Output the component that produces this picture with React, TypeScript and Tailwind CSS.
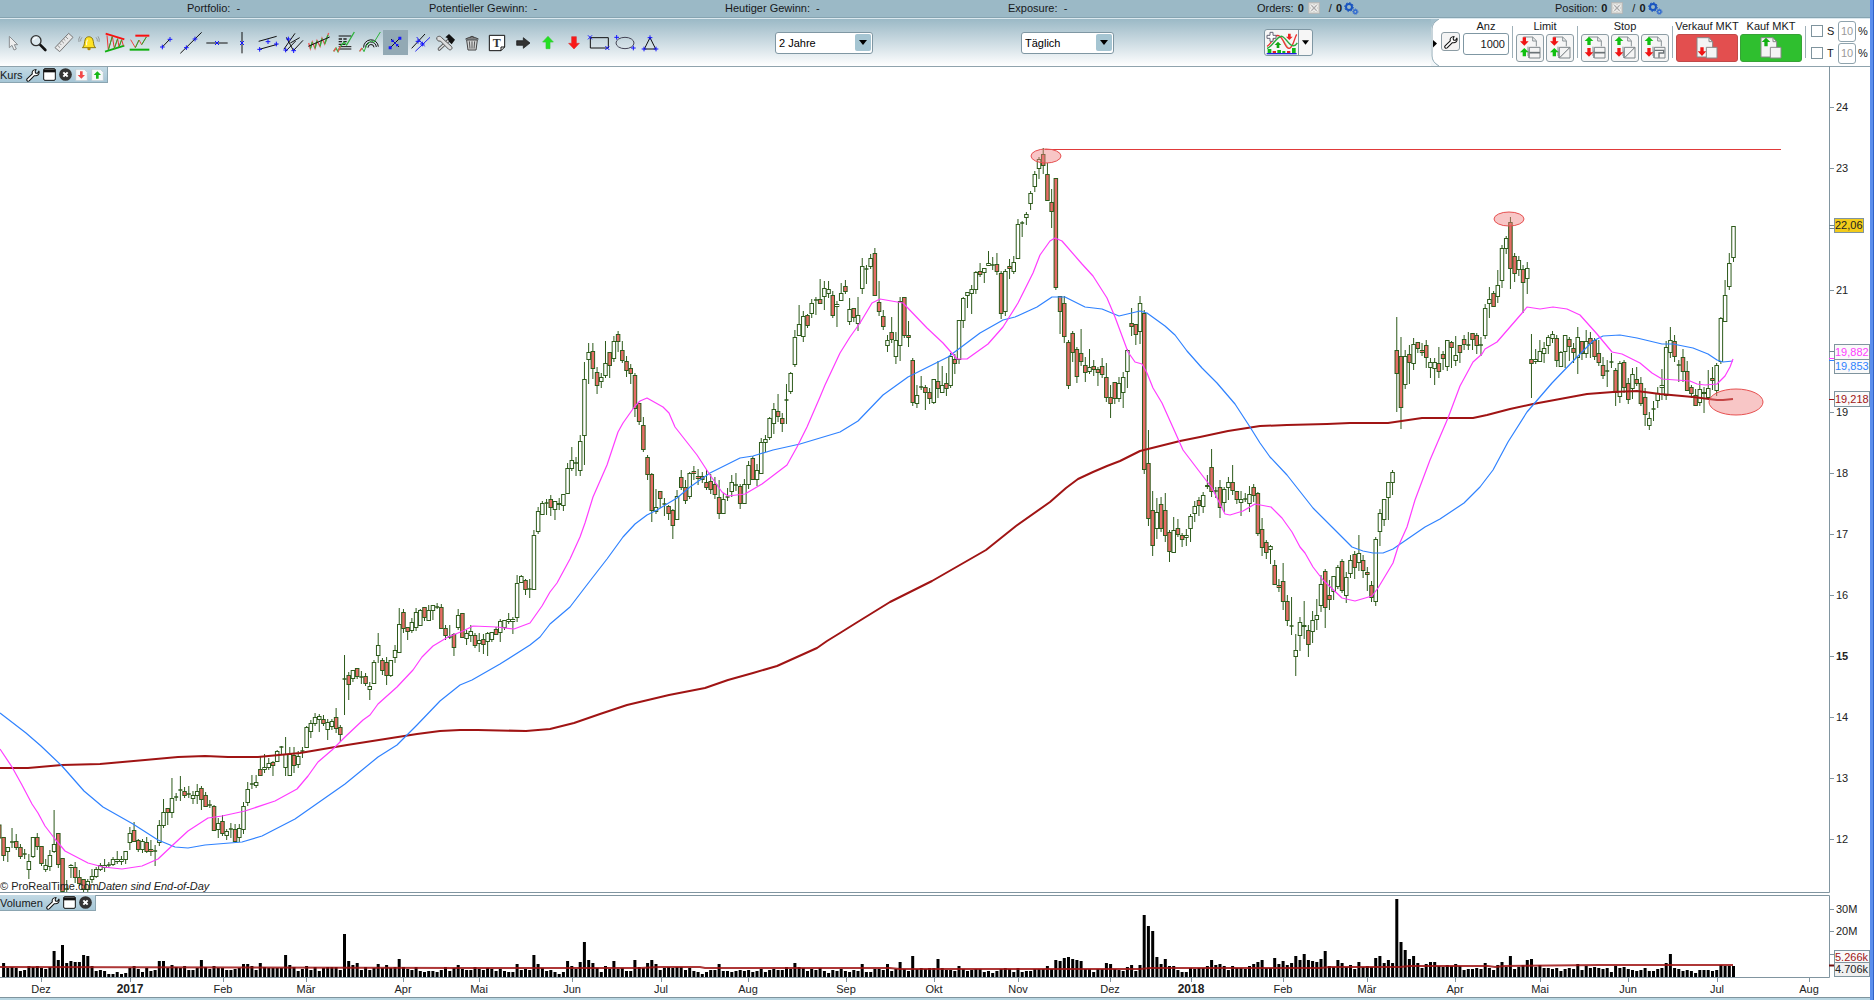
import React from "react";

/* ---------- chart data ---------- */

const FIRST_X = 3.6;
const STEP = 4.209;

// One entry per session: high, body top, body bottom, low; "r" marks a falling session.
const SESSIONS = `
r837 837 855 860;847 847 851 861;828 842 842 847;r834 841 847 849;r844 847 856 858;849 854 854 858;854 861 869 878;837 837 856 857;r833 837 846 849;r846 846 863 865;
859 865 869 871;850 855 866 870;810 844 851 852;r833 833 864 867;r858 858 891 891;880 889 889 891;864 865 867 877;r862 867 877 882;r870 877 883 885;r879 879 889 891;
879 881 889 891;869 876 879 882;867 869 876 877;863 865 869 870;859 865 867 871;862 865 865 867;857 859 864 865;851 859 861 863;856 859 861 864;851 851 859 863;
827 833 842 849;r822 830 841 841;r839 840 849 851;839 841 849 852;r837 842 851 852;r840 849 851 855;845 851 851 865;820 825 842 845;799 812 825 827;r808 808 812 824;
778 798 812 817;793 797 797 800;776 790 790 800;r787 791 795 797;786 794 794 797;791 795 798 803;784 791 795 803;r786 788 799 809;r792 795 806 806;800 805 805 807;
r805 806 830 830;818 823 829 837;r815 821 833 835;829 831 835 839;823 829 829 837;r824 829 841 841;824 828 837 841;802 806 829 833;782 789 802 805;775 784 784 788;
775 782 785 787;r757 769 775 775;754 767 769 772;758 763 767 769;r761 762 765 775;750 751 761 761;746 747 747 753;737 754 767 775;747 754 775 775;r747 755 765 772;
751 756 764 767;747 751 751 757;726 727 747 747;720 723 731 737;713 717 723 725;714 716 719 731;r715 719 723 725;719 722 729 739;719 721 726 729;r708 717 728 732;
r725 727 734 741;655 679 679 714;r672 675 684 699;670 670 678 681;r668 668 676 678;671 677 677 683;r673 676 683 685;682 686 689 699;660 662 683 683;633 645 655 662;
r658 660 670 674;r657 662 675 684;660 660 675 676;645 650 657 662;608 624 652 652;r609 612 628 632;r627 627 631 639;618 622 630 632;608 612 627 630;609 610 625 625;
r607 607 617 620;605 610 620 620;605 605 610 619;603 607 607 608;r604 607 628 628;r625 628 635 639;625 637 637 638;r633 634 647 655;609 615 627 629;r613 613 637 637;
630 633 638 644;625 631 635 641;r633 635 645 647;633 640 643 651;r634 639 644 653;632 633 641 655;632 632 639 641;r627 629 634 634;619 621 632 641;620 620 627 629;
613 619 621 623;617 619 621 633;575 583 617 621;575 576 582 582;r579 580 589 594;579 589 589 597;530 535 589 589;507 511 531 533;501 503 514 514;499 503 503 514;
r495 499 507 515;501 501 509 519;498 503 504 509;494 494 505 510;463 468 493 493;447 460 468 470;457 463 463 475;435 441 470 475;362 379 435 464;343 352 359 383;
r343 351 368 378;r367 372 385 393;373 377 381 387;341 363 375 377;r352 352 365 377;336 341 358 361;r331 334 341 351;r341 350 360 362;r356 361 370 376;r364 368 373 383;
r373 375 408 416;r403 403 421 424;r417 425 449 451;r455 457 474 479;r473 474 510 521;489 507 511 513;r491 491 498 507;498 504 504 515;r505 506 513 519;r509 510 525 538;
490 496 519 519;r470 477 487 489;r480 487 500 503;472 473 496 498;r466 471 473 479;r469 476 478 484;r472 476 479 482;r470 482 487 489;r474 481 489 493;r477 484 494 498;
r480 497 513 518;493 499 513 513;488 497 497 500;475 482 491 496;473 485 485 490;r484 486 503 508;479 484 503 503;461 465 484 488;r456 458 479 479;464 470 479 485;
438 442 473 473;435 439 442 451;417 418 437 439;403 409 423 433;r394 411 416 421;r413 418 423 431;384 400 400 423;372 373 391 393;330 337 364 366;305 324 335 335;
311 316 336 341;r314 315 325 327;299 303 313 317;297 300 300 314;r279 299 303 303;281 288 296 309;281 289 293 297;r291 295 315 317;301 304 306 326;283 293 300 300;
r280 286 291 293;298 309 321 324;r308 308 317 321;297 315 323 330;258 266 288 293;265 269 269 283;254 258 266 268;r248 253 295 295;r281 302 311 315;r310 316 326 329;
335 340 345 351;r317 332 339 342;332 340 356 363;297 301 345 360;r297 297 335 337;r321 335 337 346;r358 360 402 405;385 395 403 407;376 387 387 389;r385 387 392 409;
r388 392 398 403;379 379 402 403;r361 381 388 397;366 385 392 392;r373 383 388 395;353 356 385 387;r354 359 363 373;320 320 359 363;297 298 320 327;292 292 295 307;
285 289 293 313;271 272 289 293;r263 271 274 276;268 268 272 282;251 263 265 265;257 265 265 269;r253 264 271 274;r271 273 313 318;269 271 311 315;r259 266 268 278;
256 262 271 273;219 224 258 258;221 223 223 236;212 214 217 224;191 193 203 209;171 174 186 191;157 159 168 178;r148 154 165 173;r163 174 200 200;r189 202 211 227;
r178 178 287 289;r296 296 311 333;r296 303 336 342;r340 342 385 388;r331 333 352 361;r347 349 376 382;r329 353 361 365;r357 365 372 381;349 367 371 373;r360 366 369 375;
r367 369 372 385;r358 366 374 377;r363 377 397 401;r385 397 403 417;r382 382 398 403;377 383 398 401;372 377 392 407;349 350 371 387;r308 323 326 335;r324 324 334 344;
296 303 331 343;r310 313 469 473;r430 463 518 525;r491 510 545 555;498 512 528 538;r497 504 528 531;r493 510 535 541;r530 532 551 561;517 530 552 552;r519 528 534 536;
r533 535 539 546;529 535 537 545;514 516 528 541;501 506 513 521;r497 500 505 515;492 495 506 512;r475 485 486 488;r449 467 491 496;487 491 491 497;r480 487 507 517;
487 489 502 511;477 482 487 499;r465 482 490 494;r491 491 499 503;491 499 502 515;493 499 499 501;486 494 503 511;r484 487 495 501;r492 493 533 535;r518 529 547 555;
r540 542 552 558;545 546 549 563;r560 565 584 584;r579 585 587 591;r563 581 601 609;r595 601 620 625;597 626 626 634;634 650 656 675;617 622 635 650;601 625 626 638;
r625 630 644 656;611 620 631 642;599 615 619 629;575 584 605 611;r569 571 607 627;r580 595 599 609;576 576 591 599;565 567 586 588;r559 561 590 592;572 577 595 602;
555 560 573 577;r551 554 567 578;535 553 562 570;r555 560 570 577;r567 572 574 590;r581 585 597 601;537 539 601 605;509 513 531 545;499 499 519 525;482 482 497 519;
470 472 482 494;r317 350 373 411;r337 356 407 428;350 356 384 388;r345 354 362 383;338 344 363 369;r342 342 348 352;r343 350 352 355;r340 345 357 367;358 362 367 377;
358 362 368 384;r347 363 371 377;r351 354 358 369;340 340 366 370;r341 342 347 367;336 355 360 365;r345 345 352 362;r335 339 344 349;332 345 345 349;r333 333 339 349;
r333 335 345 353;337 345 345 355;304 308 335 338;287 299 303 317;r291 293 306 306;270 285 296 302;245 248 280 287;236 238 248 253;r217 222 268 288;r253 256 273 281;
256 260 269 275;r265 269 282 312;262 268 278 293;r334 359 363 397;349 359 361 363;340 351 361 361;342 348 353 362;335 337 345 353;331 334 338 342;r335 338 360 366;
351 352 366 366;335 335 351 367;r337 339 346 360;r343 348 352 362;327 337 357 373;r341 341 353 359;330 341 353 357;r332 338 343 357;r338 340 356 359;r340 353 362 365;
r357 365 375 378;360 371 371 386;353 362 362 367;r368 370 392 405;361 363 396 402;r360 362 387 392;r378 383 399 403;368 374 388 398;r367 379 383 385;r377 383 403 405;
r388 397 414 425;412 418 425 429;401 409 409 420;387 393 400 407;369 385 387 399;341 347 395 399;327 340 352 357;r335 341 356 361;360 365 365 381;r349 357 371 381;
r361 371 390 390;r385 387 393 397;r389 395 405 405;381 389 402 405;r387 392 393 412;370 388 397 397;r367 378 380 389;363 365 390 395;317 318 361 363;280 295 321 321;
253 263 286 289;226 226 257 261`
  .trim()
  .split(";")
  .map((entry) => {
    const text = entry.trim();
    const falling = text.startsWith("r");
    const [high, top, bottom, low] = text.replace("r", "").split(" ").map(Number);
    return { falling, high, top, bottom, low };
  });

const VOLUMES = `
14 9 10 9 6 7 11 10 11 9 8 10 26 17 32 14 16 15 15 22 21 11 6 7 6 3 3 5 3 4 9 11 8 5 9 6 7 16 16 9
12 10 9 11 7 7 9 17 10 8 11 9 9 7 7 8 9 13 13 11 7 14 10 9 9 9 9 22 12 10 6 8 11 7 10 6 9 10 10 10
7 43 16 12 14 7 10 7 9 13 9 12 9 10 18 10 8 7 10 6 5 6 6 5 7 10 6 9 12 8 7 7 10 8 7 9 8 6 8 6
5 5 13 7 8 7 22 13 9 6 7 5 3 5 16 11 8 15 35 17 14 9 5 11 8 16 8 9 6 6 17 10 9 14 17 13 7 9 10 9
10 10 7 9 6 5 3 5 7 7 13 6 6 5 6 7 6 7 5 6 8 5 7 8 7 7 10 8 14 10 9 6 8 7 9 6 4 7 6 8
6 5 7 6 13 5 5 8 8 7 13 6 8 15 8 6 21 8 9 8 9 9 18 9 7 7 6 11 8 6 7 8 8 5 6 4 6 8 9 8
5 9 5 6 6 8 8 8 11 8 17 16 19 20 18 17 16 8 8 5 8 8 14 13 8 7 6 10 12 6 12 62 51 46 20 13 18 11 11 7
5 5 9 8 9 9 11 17 12 13 11 7 11 9 9 8 11 13 15 17 9 9 19 13 16 12 14 21 17 23 17 16 15 18 26 11 10 17 14 10
12 8 15 10 11 10 19 21 14 17 14 78 35 27 18 21 14 9 13 15 15 11 10 12 11 13 11 7 8 8 9 8 14 9 7 12 15 10 21 8
10 12 17 18 10 12 9 9 8 9 6 8 9 8 13 7 11 9 10 9 8 9 5 11 9 10 8 7 6 7 9 6 6 8 9 14 23 9 8 6
7 6 4 7 7 7 6 7 12 11 11 11`
  .trim()
  .split(/\s+/)
  .map(Number);

const SLOW_AVERAGE =
  "0,768 28,768 62,765 100,764 145,760 178,757 205,756 228,757 258,757 300,753 347,745 417,734 440,731 460,730 478,730 526,731 550,729 574,723 600,714 627,705 669,695 705,688 728,680 753,673 777,666 797,657 817,648 827,641 840,633 856,623 890,602 932,581 986,550 1016,526 1050,502 1066,488 1078,479 1093,472 1107,466 1120,461 1140,451 1180,441 1200,437 1228,431 1260,426 1287,425 1327,424 1350,423 1388,423 1422,418 1473,418 1487,415 1510,409 1533,404 1560,399 1587,394 1613,392 1637,391 1660,394 1693,397 1717,400 1723,400 1733,399";

const MEDIUM_AVERAGE =
  "0,713 26,733 41,746 62,766 84,791 103,807 133,824 158,840 175,847 188,848 205,845 242,842 262,836 295,819 345,784 378,757 397,745 417,725 440,701 460,685 472,680 500,664 530,645 540,637 550,624 570,607 583,590 593,577 607,559 623,537 635,524 647,515 657,510 677,498 690,487 710,473 740,458 753,456 773,450 800,444 840,432 858,421 883,395 908,377 948,357 980,333 1003,320 1015,317 1037,307 1052,297 1065,297 1085,307 1102,309 1119,316 1140,311 1147,313 1165,326 1175,335 1187,351 1202,368 1217,383 1235,404 1250,427 1260,443 1270,457 1287,475 1313,508 1333,528 1352,547 1363,551 1373,553 1383,553 1393,549 1425,527 1440,519 1464,503 1480,487 1493,470 1508,442 1527,412 1552,383 1577,357 1593,341 1603,336 1620,335 1637,338 1662,344 1673,344 1693,348 1708,354 1717,360 1723,362 1733,361";

const FAST_AVERAGE =
  "0,749 12,767 22,785 32,804 38,813 45,826 55,839 65,851 88,863 103,867 122,869 142,866 158,859 175,843 188,831 208,818 222,816 245,811 275,801 297,789 308,776 318,762 332,750 345,737 363,720 370,715 378,704 397,687 413,670 422,657 433,646 448,637 463,631 473,626 497,627 514,629 530,623 542,606 550,592 557,583 570,559 580,537 585,523 593,497 607,465 618,432 623,423 635,406 640,401 647,398 663,407 669,413 675,427 697,455 710,475 722,492 728,496 745,494 762,484 787,465 797,447 807,427 820,397 825,385 840,353 850,337 860,323 872,303 880,299 903,303 927,328 943,343 957,359 967,359 988,344 1003,327 1018,303 1033,273 1040,255 1050,241 1055,238 1062,241 1082,264 1093,276 1107,298 1115,317 1128,352 1135,362 1142,364 1147,373 1153,388 1162,403 1175,432 1183,450 1202,475 1212,488 1218,500 1225,514 1230,515 1243,511 1255,504 1271,507 1282,518 1292,532 1300,547 1305,553 1313,567 1323,580 1342,598 1355,601 1372,596 1378,588 1393,563 1398,547 1407,527 1415,500 1430,460 1448,418 1460,386 1473,362 1482,354 1485,349 1497,342 1510,327 1523,312 1527,307 1540,309 1553,307 1567,309 1580,315 1597,334 1612,352 1622,354 1640,363 1652,373 1662,379 1690,381 1697,384 1705,385 1717,384 1725,376 1730,367 1733,359";

const VOLUME_AVERAGE =
  "0,967 460,968 640,968 660,967 700,967 705,968 890,968 900,969 1140,969 1150,968 1320,968 1330,967 1400,967 1410,966 1488,966 1495,967 1505,966 1600,965 1733,965";

const PRICES = [24, 23, 21, 19, 18, 17, 16, 15, 14, 13, 12];

const MONTHS: [number, string][] = [
  [41, "Dez"], [130, "2017"], [223, "Feb"], [306, "Mär"], [403, "Apr"], [479, "Mai"], [572, "Jun"],
  [661, "Jul"], [748, "Aug"], [846, "Sep"], [934, "Okt"], [1018, "Nov"], [1110, "Dez"], [1191, "2018"],
  [1283, "Feb"], [1367, "Mär"], [1455, "Apr"], [1540, "Mai"], [1628, "Jun"], [1717, "Jul"], [1809, "Aug"],
];

/* ---------- toolbar drawings ---------- */

type MarkProps = { x: number; y: number };

function Plus({ x, y }: MarkProps) {
  return <path d={`M${x - 7} ${y}h14M${x} ${y - 7}v14`} stroke="#1414ff" strokeWidth="3" fill="none" />;
}

function Cross({ x, y }: MarkProps) {
  return <path d={`M${x - 6} ${y - 6}l12 12M${x + 6} ${y - 6}l-12 12`} stroke="#1414ff" strokeWidth="3" fill="none" />;
}

function Wrench({ className }: { className: string }) {
  return (
    <svg viewBox="0 0 40 40" className={className} aria-hidden="true">
      <path
        d="M3 31 18 17c-2-7 3-13 11-13l-3 7 2 4h5l4-6c2 9-4 15-13 13L9 37c-4 3-9-2-6-6z"
        fill="#fff" stroke="#111" strokeWidth="3" strokeLinejoin="round"
      />
    </svg>
  );
}

const INK = { stroke: "#111", strokeWidth: 3, fill: "none" };

const TOOLS: { name: string; art: React.ReactNode }[] = [
  { name: "Auswahl", art: <path d="M-11-20v34l8-7 6 14 7-3-6-13h10z" fill="#eee" stroke="#8b8f92" strokeWidth="3" /> },
  {
    name: "Lupe",
    art: <><path d="M6 5 22 21" stroke="#111" strokeWidth="8" strokeLinecap="round" /><circle cx="-6" cy="-7" r="15" fill="#dce8ee" stroke="#333" strokeWidth="4" /><path d="M-14-9q3-8 11-7" stroke="#fff" strokeWidth="4" fill="none" /></>,
  },
  {
    name: "Lineal",
    art: <><path d="M-27 14 14-29 27-17-13 26z" fill="#e8e8e8" stroke="#777" strokeWidth="3" /><path d="M-19 7l7 7M-13 1l5 5M-7-6l7 7M-1-12l5 5M5-19l7 7" stroke="#666" strokeWidth="2" /></>,
  },
  {
    name: "Alarm",
    art: <><path d="M-20 14c8-5 5-17 9-26 3-9 18-9 22 0 4 9 1 21 9 26z" fill="#ffe324" stroke="#8c7a10" strokeWidth="3" /><circle cy="17" r="5" fill="#b58c00" /><path d="M-5-10q-3 7-2 17" stroke="#fff" strokeWidth="3" fill="none" /><path d="M-21-17q-5 5-4 12M-27-20q-6 8-3 17M21-17q5 5 4 12M27-20q6 8 3 17" stroke="#777" strokeWidth="2" fill="none" /></>,
  },
  {
    name: "Dreiecksmuster",
    art: <><path d="M-28-28 28-11" stroke="#fa1010" strokeWidth="6" /><path d="M-30 26 28 8" stroke="#10b010" strokeWidth="6" /><path d="M-24-23-20 21-8-20-2 16 8-13 12 12 20-10 25 8" stroke="#e33" strokeWidth="3" fill="none" /><path d="M-20 21-8-20M-2 16 8-13M12 12l8-22" stroke="#1db32a" strokeWidth="3" /></>,
  },
  {
    name: "Rechteckmuster",
    art: <><path d="M-14-22h42" stroke="#fa1010" strokeWidth="6" /><path d="M-31 20h59" stroke="#10b010" strokeWidth="6" /><path d="M-28-10-14 14-3-9 5 5 19-18" stroke="#e44" strokeWidth="3" fill="none" /><path d="M-14 14-3-9M5 5l14-23" stroke="#1db32a" strokeWidth="3" /></>,
  },
  { name: "Segment", art: <><path d="M-11 12 11-11" {...INK} /><Plus x={-11} y={12} /><Plus x={12} y={-11} /></> },
  { name: "Gerade", art: <><path d="M-32 31 32-32" {...INK} /><Plus x={-14} y={14} /><Plus x={12} y={-12} /></> },
  { name: "Horizontale", art: <><path d="M-32 0h64" {...INK} /><Cross x={0} y={0} /></> },
  { name: "Vertikale", art: <><path d="M0-33v64" {...INK} /><Cross x={0} y={0} /></> },
  { name: "Kanal", art: <><path d="M-28-5 26-20M-26 19 28 4" {...INK} /><Plus x={-25} y={19} /><Plus x={0} y={-4} /><Plus x={25} y={3} /></> },
  { name: "Pitchfork", art: <><path d="M-27 18 6-29M-20-17 2 24M-8 0 20-16M-22 25 8-6M2 22 30-8" {...INK} /><Plus x={-14} y={-12} /><Plus x={-22} y={21} /><Plus x={2} y={23} /></> },
  {
    name: "Regression",
    art: <><path d="M-31 0-26 17-20-3-12 16-6-7 3 10 9-14 17 3 29-30" stroke="#e55" strokeWidth="4" fill="none" /><path d="M-26 17-20-3M-12 16-6-7M3 10 9-14M17 3 27-24" stroke="#2db33a" strokeWidth="4" /><path d="M-32 10 32-18" {...INK} /></>,
  },
  {
    name: "Fibonacci",
    art: <><path d="M-16-21h38M-16 11h38M-16 18h38" {...INK} /><path d="M-16-12h10M-2-12h10M-16-4h10M-2-4h10M-16 4h20" stroke="#222" strokeWidth="4" /><path d="M-31 25-24 15-18 26-11 10 0-2 8 6 31-33" stroke="#2db33a" strokeWidth="4" fill="none" /><path d="M-31 25-24 15M-18 26-11 10" stroke="#e55" strokeWidth="4" /></>,
  },
  {
    name: "Fibonacci-Bögen",
    art: <><path d="M-19 14a22 22 0 0 1 44-3M-13 14a16 16 0 0 1 32-2M-6 14a9 9 0 0 1 18-1" {...INK} /><path d="M-31 25-24 15-18 26-11 8 4-7 12-2 31-33" stroke="#2db33a" strokeWidth="3" fill="none" /><path d="M-31 25-24 15" stroke="#e55" strokeWidth="4" /></>,
  },
  {
    name: "Trendlinie magnetisch",
    art: <><path d="M-18 18 18-18M-12-12 12 12" {...INK} /><g fill="#1414ff"><path d="M-19 10h9v9h-9zM10-19h9v9h-9zM-11-10h7v7h-7zM3 3h7v7H3zM-2-2h5v5h-5z" /></g></>,
  },
  {
    name: "Parallele",
    art: <><path d="M-28 16 12-27" {...INK} /><path d="M-17 25 27-17M-13-18 11 10" stroke="#2020f0" strokeWidth="3" /><Plus x={-9} y={-5} /><Plus x={4} y={3} /></>,
  },
  {
    name: "Werkzeuge",
    art: <><path d="M-20 18 8-8" stroke="#555" strokeWidth="10" strokeLinecap="round" /><path d="M-20 18 8-8" stroke="#ddd" strokeWidth="5" strokeLinecap="round" /><path d="M-28-16c5-6 12-5 15 0l29 26c6 6-2 14-8 9L-17-6c-6 2-11-2-11-10z" fill="#ddd" stroke="#555" strokeWidth="3" /><path d="M-2-17 9-27 27-10 17 4 9-4 4-15z" fill="#111" /></>,
  },
  {
    name: "Löschen",
    art: <><path d="M-16-9h32l-4 30h-24z" fill="#d4d6d6" stroke="#444" strokeWidth="3" /><path d="M-8-5l2 22M0-5v22M8-5 6 17" stroke="#555" strokeWidth="3" /><path d="M-19-12q19-12 38 0zM-6-17q6-7 12 0" fill="#bbb" stroke="#444" strokeWidth="3" /></>,
  },
  {
    name: "Text",
    art: <><path d="M-23-23h46v35L12 23h-35z" fill="#fff" stroke="#111" strokeWidth="3" /><path d="M12 23V12h11" {...INK} /><text x="-1" y="12" fontSize="36" fontWeight="700" textAnchor="middle" className="font-['Liberation_Serif',serif]" fill="#333">T</text></>,
  },
  { name: "Pfeil rechts", art: <path d="M-19-7H1v-9l20 16L1 16V7h-20z" fill="#333" stroke="#111" strokeWidth="2" /> },
  { name: "Pfeil hoch", art: <path d="M0-20 16-3H6v20H-6V-3h-10z" fill="#22e022" stroke="#3c3" strokeWidth="2" /> },
  { name: "Pfeil runter", art: <path d="M0 18-16 1h9v-20H7V1h9z" fill="#fa1818" stroke="#d33" strokeWidth="2" /> },
  { name: "Rechteck", art: <><path d="M-26-16h54v31h-54z" {...INK} /><Cross x={-27} y={-17} /><Cross x={25} y={15} /></> },
  { name: "Ellipse", art: <><ellipse rx="27" ry="17" {...INK} stroke="#445" /><Plus x={-25} y={-17} /><Plus x={25} y={15} /></> },
  { name: "Dreieck", art: <><path d="M0-16 17 18h-34z" {...INK} /><Plus x={0} y={-16} /><Plus x={-18} y={18} /><Plus x={18} y={18} /></> },
];

function Gears() {
  return (
    <svg viewBox="0 0 45 39" className="h-[13px] w-[15px]" aria-hidden="true">
      <circle cx="15" cy="15" r="9" fill="none" stroke="#1a55c0" strokeWidth="6" />
      <circle cx="15" cy="15" r="13" fill="none" stroke="#1a55c0" strokeWidth="3" strokeDasharray="5 5" />
      <circle cx="34" cy="29" r="5" fill="none" stroke="#2b66d0" strokeWidth="4" />
      <circle cx="34" cy="29" r="8" fill="none" stroke="#2b66d0" strokeWidth="3" strokeDasharray="3 3" />
    </svg>
  );
}

function GreyCancel() {
  return (
    <svg viewBox="0 0 36 36" className="h-3 w-3" aria-hidden="true">
      <path d="M1 1h34v34H1z" fill="#d6d6d2" stroke="#aaa" strokeWidth="2" />
      <path d="M9 9l18 18M27 9 9 27" stroke="#fff" strokeWidth="9" />
      <path d="M10 10l16 16M26 10 10 26" stroke="#aaa" strokeWidth="4" />
    </svg>
  );
}

function Counter({ label }: { label: string }) {
  return (
    <div className="flex items-center">
      <span>{label}</span>
      <b className="ml-1">0</b>
      <button aria-label={`${label} löschen`} className="ml-1"><GreyCancel /></button>
      <span className="ml-[9px]">/</span>
      <b className="ml-1">0</b>
      <button aria-label={`${label} Einstellungen`} className="ml-[2px]"><Gears /></button>
    </div>
  );
}

function DropDown({ label, value, width }: { label: string; value: string; width: string }) {
  return (
    <div className={`relative h-[22px] ${width}`}>
      <select
        aria-label={label}
        defaultValue={value}
        className="h-full w-full appearance-none rounded-[3px] border border-[#7f97a3] bg-white pl-[3px] text-[11px] text-black outline-none"
      >
        <option>{value}</option>
      </select>
      <span className="pointer-events-none absolute right-[2px] top-[2px] flex h-[17px] w-4 items-center justify-center rounded-[2px] bg-[#a5c5d2]">
        <svg viewBox="0 0 8 5" className="h-[5px] w-2"><path d="M0 0h8L4 5z" fill="#000" /></svg>
      </span>
    </div>
  );
}

type OrderKind = "limit" | "limit-free" | "stop" | "stop-free" | "stop-trail";

function OrderButton({ kind, label }: { kind: OrderKind; label: string }) {
  const sellFirst = kind === "limit" || kind === "limit-free";
  return (
    <button aria-label={label} className="flex h-7 w-7 items-center justify-center rounded-[3px] border border-[#8c9ca4] bg-[#f6f6f6]">
      <svg viewBox="3 3 78 78" className="h-[26px] w-[26px]" aria-hidden="true">
        <path d="M22 9h28l11 11v17M38 72V50M50 9v12h11M36 38v28" fill="none" stroke="#8a9296" strokeWidth="3" />
        {sellFirst ? (
          <>
            <path d="M25 35 12 22h8V10h10v12h8z" fill="#f01414" />
            <path d="M25 42 12 55h8v12h10V55h8z" fill="#10c010" />
          </>
        ) : (
          <>
            <path d="M24 8 11 21h8v12h10V21h8z" fill="#10c010" />
            <path d="M24 68 11 55h8V42h10v13h8z" fill="#f01414" />
          </>
        )}
        <path d="M40 40h32v32H40z" fill="#f4f4f4" stroke="#7d8589" strokeWidth="3" />
        {(kind === "limit" || kind === "stop") && <path d="M40 56h32" stroke="#6b7377" strokeWidth="5" />}
        {(kind === "limit-free" || kind === "stop-free") && <path d="M41 71 71 41" stroke="#6b7377" strokeWidth="3" />}
        {kind === "stop-trail" && <path d="M41 49h27v8H54v14" stroke="#6b7377" strokeWidth="4" fill="none" />}
      </svg>
    </button>
  );
}

function MarketButton({ side }: { side: "sell" | "buy" }) {
  const sell = side === "sell";
  return (
    <button
      aria-label={sell ? "Verkauf MKT" : "Kauf MKT"}
      className={`flex h-7 w-[62px] items-center justify-center rounded-[3px] border ${sell ? "border-[#c04a4a] bg-[#e34f4f]" : "border-[#37a337] bg-[#2fbf2f]"}`}
    >
      <svg viewBox="0 0 66 66" className="h-[22px] w-[22px]" aria-hidden="true">
        <path d="M3 2h36l11 12v46H3z" fill="#f4f4f4" stroke="#888" strokeWidth="3" />
        <path d="M39 2v12h11" fill="none" stroke="#888" strokeWidth="3" />
        {sell ? (
          <path d="M18 57 5 43h8V31h10v12h8z" fill="#f01414" />
        ) : (
          <path d="M18 2 5 15h8v13h10V15h8z" fill="#10b010" />
        )}
        <path d="M31 31h32v32H31z" fill="#f4f4f4" stroke="#888" strokeWidth="3" />
      </svg>
    </button>
  );
}

function Divider() {
  return <div className="mt-[7px] h-8 w-px bg-[#9fb0b8]" />;
}

function ProtectionRow({ letter }: { letter: string }) {
  return (
    <div className="flex h-[22px] items-center">
      <label className="flex items-center">
        <input type="checkbox" className="h-3 w-3 appearance-none border border-[#7f949e] bg-white" />
        <span className="ml-1 w-[7px]">{letter}</span>
      </label>
      <label className="ml-1 flex items-center">
        <input
          aria-label={`${letter} Prozent`}
          defaultValue="10"
          className="h-[21px] w-[18px] rounded-[3px] border border-[#8fa3ad] bg-white text-center text-[11px] text-[#999] outline-none"
        />
        <span className="ml-[2px]">%</span>
      </label>
    </div>
  );
}

function TradePanel() {
  return (
    <section aria-label="Handel" className="relative flex h-[47px] whitespace-nowrap bg-white pl-[10px]">
      <svg viewBox="0 0 10 47" className="absolute left-0 top-0 h-[47px] w-[10px]" aria-hidden="true">
        <path d="M0 0h8q-7 4-8 10z" fill="#a6c1cd" />
        <path d="M0 47h8q-7-4-8-9z" fill="#f2f6f8" />
        <path d="M8 0Q1 4 1 10v27q0 6 7 10" fill="none" stroke="#8fa9b5" strokeWidth="1" />
        <path d="M2 21l4 3.500-4 4z" fill="#000" />
      </svg>
      <button aria-label="Handelseinstellungen" className="mt-[13px] flex h-[19px] w-[19px] items-center justify-center rounded-[3px] border border-[#8c9ca4] bg-[#f4f4f4]">
        <Wrench className="h-[14px] w-[14px]" />
      </button>
      <label className="mx-[3px] flex w-[46px] flex-col items-center">
        <span className="h-[14px] leading-[14px]">Anz</span>
        <input defaultValue="1000" className="h-[22px] w-full rounded-[3px] border border-[#7f97a3] bg-white pr-[3px] text-right text-[11px] outline-none" />
      </label>
      <Divider />
      <div className="mx-[3px] flex flex-col items-center">
        <span className="h-[15px] leading-[14px]">Limit</span>
        <div className="flex gap-[2px]">
          <OrderButton kind="limit" label="Limit" />
          <OrderButton kind="limit-free" label="Limit frei" />
        </div>
      </div>
      <Divider />
      <div className="mx-[3px] flex flex-col items-center">
        <span className="h-[15px] leading-[14px]">Stop</span>
        <div className="flex gap-[2px]">
          <OrderButton kind="stop" label="Stop" />
          <OrderButton kind="stop-free" label="Stop frei" />
          <OrderButton kind="stop-trail" label="Stop nachziehend" />
        </div>
      </div>
      <Divider />
      <div className="mx-[3px] flex gap-[2px]">
        <div className="flex w-[62px] flex-col items-center">
          <span className="h-[15px] leading-[14px]">Verkauf MKT</span>
          <MarketButton side="sell" />
        </div>
        <div className="flex w-[62px] flex-col items-center">
          <span className="h-[15px] leading-[14px]">Kauf MKT</span>
          <MarketButton side="buy" />
        </div>
      </div>
      <Divider />
      <div className="ml-[5px] pt-px">
        <ProtectionRow letter="S" />
        <ProtectionRow letter="T" />
      </div>
    </section>
  );
}

function PaneTitle({ title, orders }: { title: string; orders?: boolean }) {
  return (
    <div className="absolute left-0 top-px flex h-4 items-center gap-[3px] border-b border-r border-[#8ba5b1] bg-linear-to-b from-[#c3dae5] to-[#a6c6d6] pr-[3px] text-[11px]">
      <span>{title}</span>
      <button aria-label="Einstellungen"><Wrench className="h-[14px] w-[14px]" /></button>
      <button aria-label="Fenster">
        <svg viewBox="0 0 39 39" className="h-[13px] w-[13px]"><rect x="2" y="2" width="35" height="35" rx="4" fill="#fff" stroke="#111" strokeWidth="3" /><path d="M2 4h35v9H2z" fill="#111" /></svg>
      </button>
      <button aria-label="Schließen">
        <svg viewBox="0 0 39 39" className="h-[13px] w-[13px]"><circle cx="19.500" cy="19.500" r="19" fill="#333" /><path d="M13 13l13 13M26 13 13 26" stroke="#fff" strokeWidth="6" /></svg>
      </button>
      {orders && (
        <>
          <button aria-label="Verkaufen">
            <svg viewBox="0 0 39 36" className="h-3 w-[13px]"><path d="M2 1h26l9 9v25H2z" fill="#f5f8fa" stroke="#b6c4cc" strokeWidth="2" /><path d="M19 29 8 18h7V7h8v11h7z" fill="#f24848" /></svg>
          </button>
          <button aria-label="Kaufen">
            <svg viewBox="0 0 39 36" className="h-3 w-[13px]"><path d="M2 1h26l9 9v25H2z" fill="#f5f8fa" stroke="#b6c4cc" strokeWidth="2" /><path d="M19 7 8 18h7v11h8V18h7z" fill="#16b816" /></svg>
          </button>
        </>
      )}
    </div>
  );
}

type TagProps = { y: number; height: number; width: number; text: string; color: string; fill: string };

function AxisTag({ y, height, width, text, color, fill }: TagProps) {
  return (
    <g>
      <rect x="1834.500" y={y + 0.5} width={width} height={height} fill={fill} stroke="#7f949e" />
      <text x="1835" y={y + height / 2 + 4} fill={color}>{text}</text>
    </g>
  );
}

function PriceChart() {
  return (
    <svg viewBox="0 66 1870 828" className="block h-auto w-full" fontSize="11" role="img" aria-label="Kurs">
      <g stroke="#2d5a1b" strokeWidth="1">
        <rect x="-3" y="825" width="4" height="13" fill="#e66c66" />
        {SESSIONS.map((s, i) => {
          const x = FIRST_X + STEP * i;
          return (
            <g key={i}>
              <path d={`M${x} ${s.high}V${s.low + 1}`} />
              {s.top === s.bottom ? (
                <path d={`M${x - 2} ${s.top}h4`} strokeWidth="1.500" />
              ) : (
                <rect x={x - 1.75} y={s.top + 0.5} width="3.500" height={s.bottom - s.top} fill={s.falling ? "#e66c66" : "#fff"} />
              )}
            </g>
          );
        })}
      </g>
      <g fill="none" strokeLinejoin="round">
        <polyline points={SLOW_AVERAGE} stroke="#a01414" strokeWidth="2" />
        <polyline points={MEDIUM_AVERAGE} stroke="#2f82ff" strokeWidth="1.200" />
        <polyline points={FAST_AVERAGE} stroke="#ff3cff" strokeWidth="1.200" />
      </g>
      <path d="M1045 149.500H1781" stroke="#e03a3a" />
      <g fill="#f08080" fillOpacity="0.45" stroke="#e65050">
        <ellipse cx="1046" cy="156" rx="15" ry="7" />
        <ellipse cx="1509" cy="219" rx="15" ry="7" />
        <ellipse cx="1736" cy="402" rx="27" ry="13" />
      </g>
      <g fill="#222">
        <text x="0" y="890">© ProRealTime.com</text>
        <text x="98" y="890" fontStyle="italic">Daten sind End-of-Day</text>
      </g>
      <path d="M1829.500 66V892.500H0" fill="none" stroke="#8195a0" />
      <g fill="#222">
        {PRICES.map((p) => {
          const y = Math.round(107 + (24 - p) * 61);
          return (
            <g key={p}>
              <path d={`M1829 ${y + 0.5}h5`} stroke="#8195a0" />
              <text x="1836" y={y + 4} fontWeight={p === 15 ? 700 : 400}>{p}</text>
            </g>
          );
        })}
      </g>
      <path d="M1829 225.500h5M1829 228.500h5M1829 351.500h5" stroke="#6f858f" />
      <path d="M1829 358.500h5" stroke="#ff3cff" />
      <path d="M1829 360.500h5" stroke="#2f82ff" />
      <path d="M1829 399.500h5" stroke="#a01414" />
      <AxisTag y={218} height={14} width={29} text="22,06" color="#222" fill="#f2cb1a" />
      <AxisTag y={344} height={15} width={35} text="19,882" color="#ff3cff" fill="#fafafa" />
      <AxisTag y={359} height={14} width={35} text="19,853" color="#2f82ff" fill="#fafafa" />
      <AxisTag y={391} height={15} width={35} text="19,218" color="#a01414" fill="#fafafa" />
    </svg>
  );
}

function VolumeChart() {
  return (
    <svg viewBox="0 894 1870 103" className="block h-auto w-full" fontSize="11" role="img" aria-label="Volumen">
      <path d="M0 895.500H1829.500V977.500" fill="none" stroke="#8195a0" />
      <path d={VOLUMES.map((v, i) => `M${(FIRST_X + STEP * i).toFixed(1)} 977v${-v}`).join("")} stroke="#000" strokeWidth="3" />
      <polyline points={VOLUME_AVERAGE} fill="none" stroke="#a01414" strokeWidth="2" strokeOpacity="0.85" />
      <path d="M0 977.500H1829.500" stroke="#8195a0" />
      <g textAnchor="middle" fill="#222">
        {MONTHS.map(([x, label]) => (
          <g key={x}>
            <path d={`M${x + 0.5} 978v4`} stroke="#8195a0" />
            <text x={x} y="993" fontSize={label.startsWith("20") ? 12 : 11} fontWeight={label.startsWith("20") ? 700 : 400}>{label}</text>
          </g>
        ))}
      </g>
      <path d="M1829 909.500h5M1829 931.500h5M1829 954.500h5" stroke="#8195a0" />
      <path d="M1829 965.500h5" stroke="#701010" strokeWidth="2" />
      <text x="1836" y="913" fill="#222">30M</text>
      <text x="1836" y="935" fill="#222">20M</text>
      <AxisTag y={950} height={14} width={35} text="5.266k" color="#a01414" fill="#fafafa" />
      <AxisTag y={962} height={14} width={35} text="4.706k" color="#222" fill="#f0f0f0" />
    </svg>
  );
}

export default function App() {
  return (
    <div className="flex min-h-screen bg-white font-['Liberation_Sans',Arial,sans-serif] text-[11px] leading-[14px] text-[#16181a]">
      <div className="flex min-w-0 flex-1 flex-col">
        <header className="grid h-[18px] grid-cols-[187fr_242fr_296fr_283fr_249fr_298fr_315fr] items-center whitespace-pre border-b border-[#86a4b1] bg-[#9bb9c6] pb-px">
          <span />
          <span>{"Portfolio:  -"}</span>
          <span>{"Potentieller Gewinn:  -"}</span>
          <span>{"Heutiger Gewinn:  -"}</span>
          <span>{"Exposure:  -"}</span>
          <Counter label="Orders:" />
          <Counter label="Position:" />
        </header>

        <div className="flex h-[49px] border-b border-t border-b-[#8fa3ad] border-t-[#dbe8ee] bg-linear-to-b from-[#9bb9c6] to-white">
          <div className="grid flex-1 grid-cols-[775fr_246fr_243fr_167fr] items-center">
            <div role="toolbar" aria-label="Zeichnen" className="grid w-[663px] grid-cols-26">
              {TOOLS.map((tool) => (
                <button
                  key={tool.name}
                  aria-label={tool.name}
                  className={`flex h-[25px] items-center justify-center ${tool.name === "Trendlinie magnetisch" ? "bg-[#92a9b4]" : ""}`}
                >
                  <svg viewBox="-36 -36 72 72" className="h-6 w-6 overflow-visible" aria-hidden="true">{tool.art}</svg>
                </button>
              ))}
            </div>
            <DropDown label="Zeitraum" value="2 Jahre" width="w-[98px]" />
            <DropDown label="Zeiteinheit" value="Täglich" width="w-[93px]" />
            <div className="flex h-[27px] w-[49px] rounded-[3px] border border-[#7f97a3] bg-[#f6f6f6]">
              <button aria-label="Indikator hinzufügen" className="flex flex-1 items-center justify-center">
                <svg viewBox="0 0 96 72" className="h-6 w-8" aria-hidden="true">
                  <path d="M38 14q16 10 32 38-10 2-28-36z" fill="#bfe3b8" />
                  <path d="M3 46C18 40 22 8 38 14S58 56 70 52 84 24 92 10" fill="none" stroke="#e33" strokeWidth="4" />
                  <path d="M3 52C16 52 34 12 48 16S76 62 94 36" fill="none" stroke="#2ba83a" strokeWidth="4" />
                  <path d="M66 8v9h-6l10 10 10-10h-6V8z" fill="#e22" />
                  <path d="M32 51V42h-6l10-10 10 10h-6v9z" fill="#10a810" />
                  <path d="M12 4h9v9h9v9h-9v9h-9v-9H3v-9h9z" fill="#fff" stroke="#667" strokeWidth="3" />
                  <path d="M5 54h11v12H5zM34 57h11v9H34zM49 60h9v6h-9zM78 51h11v15H78z" fill="#10b818" />
                  <path d="M20 60h10v6H20zM63 60h10v6H63z" fill="#d22" />
                  <path d="M2 68h90" stroke="#2222e0" strokeWidth="4" />
                </svg>
              </button>
              <button aria-label="Indikatorliste" className="flex w-[14px] items-center justify-center border-l border-[#7f97a3]">
                <svg viewBox="0 0 8 5" className="h-[5px] w-[7px]"><path d="M0 0h8L4 5z" fill="#000" /></svg>
              </button>
            </div>
          </div>
          <div className="w-[439px]">
            <TradePanel />
          </div>
        </div>

        <main className="flex-1">
          <div className="relative -mt-px">
            <PriceChart />
            <PaneTitle title="Kurs" orders />
          </div>
          <div className="relative">
            <VolumeChart />
            <PaneTitle title="Volumen" />
          </div>
        </main>
        <footer className="h-[3px] border-t border-[#7f949e] bg-[#b9d6e2]" />
      </div>
      <div className="w-1 border-r border-[#2f62c8] bg-[#5b8fee]" />
    </div>
  );
}
